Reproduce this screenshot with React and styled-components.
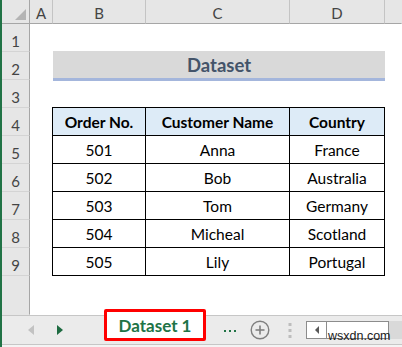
import React from "react";
import styled, { createGlobalStyle } from "styled-components";

const GlobalStyle = createGlobalStyle`
  html, body {
    margin: 0;
    padding: 0;
    background: #ffffff;
    overflow: hidden;
  }
`;

const Frame = styled.div`
  position: relative;
  width: 402px;
  height: 347px;
  box-sizing: border-box;
  border-left: 2px solid #217346;
  display: flex;
  flex-direction: column;
  font-family: Lato, "Open Sans", sans-serif;
  background: #ffffff;
`;

const Sheet = styled.div`
  display: grid;
  grid-template-columns: 28px 23px 93px 144px 95px 1fr;
  grid-template-rows: 24px repeat(9, 28px) 1fr;
  height: 315px;
  background: #ffffff;
`;

const Corner = styled.div`
  background: #e6e6e6;
  border-right: 1px solid #a6a6a6;
  border-bottom: 1px solid #a6a6a6;
  display: flex;
  align-items: flex-end;
  justify-content: flex-end;
  padding: 0 3px 3px 0;
  box-sizing: border-box;
`;

const ColHead = styled.div`
  background: #e6e6e6;
  border-right: 1px solid ${(p) => (p.$last ? "transparent" : "#c4c4c4")};
  border-bottom: 1px solid #a6a6a6;
  color: #444444;
  font-size: 15px;
  display: flex;
  align-items: center;
  justify-content: center;
  padding-top: 2px;
  box-sizing: border-box;
`;

const RowHead = styled.div`
  grid-column: 1;
  background: #e6e6e6;
  border-right: 1px solid #a6a6a6;
  border-bottom: 1px solid ${(p) => (p.$filler ? "transparent" : "#d4d4d4")};
  color: #444444;
  font-size: 15px;
  display: flex;
  align-items: center;
  justify-content: center;
  padding-top: 6px;
  box-sizing: border-box;
`;

const TitleBand = styled.div`
  grid-column: 3 / 6;
  grid-row: 3;
  align-self: start;
  margin-top: -1px;
  height: 30px;
  box-sizing: border-box;
  background: #d9d9d9;
  border-bottom: 3px solid #a4b6dc;
  color: #44546a;
  font-weight: 700;
  font-size: 18.5px;
  display: flex;
  align-items: center;
  justify-content: center;
`;

const Cell = styled.div`
  grid-column: ${(p) => p.$col};
  grid-row: ${(p) => p.$row};
  background: ${(p) => (p.$head ? "#ddebf7" : "#ffffff")};
  font-weight: ${(p) => (p.$head ? 700 : 400)};
  font-size: 15.5px;
  color: #000000;
  border-right: 1px solid #000000;
  border-bottom: 1px solid #000000;
  box-shadow: ${(p) =>
    [
      p.$first ? "-1px 0 0 #000" : null,
      p.$head ? "0 -1px 0 #000" : null,
      p.$first && p.$head ? "-1px -1px 0 #000" : null,
    ]
      .filter(Boolean)
      .join(", ") || "none"};
  display: flex;
  align-items: center;
  justify-content: center;
  box-sizing: border-box;
`;

const TabBar = styled.div`
  height: 30px;
  box-sizing: border-box;
  border-top: 1px solid #c6c6c6;
  border-bottom: 1px solid #c6c6c6;
  background: #ebebeb;
  display: flex;
  align-items: center;
  padding-left: 26px;
`;

const BottomStrip = styled.div`
  flex: 1;
  background: #f4f4f4;
`;

const NavArrow = styled.svg`
  width: 6px;
  height: 10px;
  margin-right: ${(p) => p.$gap}px;
  flex-shrink: 0;
`;

const SheetTab = styled.div`
  align-self: flex-start;
  margin-top: -7px;
  width: 102px;
  height: 32px;
  box-sizing: border-box;
  border: 3px solid #ff0000;
  border-radius: 2px;
  background: #ffffff;
  color: #217346;
  font-weight: 700;
  font-size: 17px;
  display: flex;
  align-items: center;
  justify-content: center;
  padding-top: 1px;
  margin-right: 18px;
  flex-shrink: 0;
`;

const Glyph = styled.svg`
  flex-shrink: 0;
  margin-right: ${(p) => p.$gap}px;
`;

const ScrollBox = styled.div`
  width: 83px;
  height: 18px;
  box-sizing: border-box;
  border: 1px solid #8c8c8c;
  background: #ffffff;
  display: flex;
  flex-shrink: 0;
`;

const ScrollButton = styled.div`
  width: 19px;
  border-right: 1px solid #8c8c8c;
  display: flex;
  align-items: center;
  justify-content: center;
`;

const ScrollTrack = styled.div`
  flex: 1;
  height: 18px;
  background: #d9d9d9;
`;

const Watermark = styled.div`
  position: absolute;
  left: 326px;
  top: 330px;
  font-family: "Liberation Sans", Arial, sans-serif;
  font-size: 12.5px;
  line-height: 13px;
  color: #1a1a1a;
`;

const columns = ["A", "B", "C", "D", ""];

const rows = [
  ["Order No.", "Customer Name", "Country"],
  ["501", "Anna", "France"],
  ["502", "Bob", "Australia"],
  ["503", "Tom", "Germany"],
  ["504", "Micheal", "Scotland"],
  ["505", "Lily", "Portugal"],
];

export default function App() {
  return (
    <>
      <GlobalStyle />
      <Frame>
        <Sheet>
          <Corner>
            <svg width="11" height="11" viewBox="0 0 11 11">
              <polygon points="11,0 11,11 0,11" fill="#b4b4b4" />
            </svg>
          </Corner>
          {columns.map((c, i) => (
            <ColHead key={i} $last={i === columns.length - 1}>
              {c}
            </ColHead>
          ))}
          {Array.from({ length: 9 }, (_, i) => (
            <RowHead key={i} style={{ gridRow: i + 2 }}>
              {i + 1}
            </RowHead>
          ))}
          <RowHead $filler style={{ gridRow: 11 }} />
          <TitleBand>Dataset</TitleBand>
          {rows.map((r, ri) =>
            r.map((v, ci) => (
              <Cell
                key={`${ri}-${ci}`}
                $row={ri + 5}
                $col={ci + 3}
                $head={ri === 0}
                $first={ci === 0}
              >
                {v}
              </Cell>
            ))
          )}
        </Sheet>
        <TabBar>
          <NavArrow $gap={23} viewBox="0 0 6 10">
            <polygon points="6,0 6,10 0,5" fill="#c2c2c2" />
          </NavArrow>
          <NavArrow $gap={41} viewBox="0 0 6 10">
            <polygon points="0,0 0,10 6,5" fill="#1e6b41" />
          </NavArrow>
          <SheetTab>Dataset 1</SheetTab>
          <Glyph $gap={14} width="12" height="6" viewBox="0 0 12 6">
            <rect x="0" y="3" width="2" height="2" fill="#217346" />
            <rect x="5" y="3" width="2" height="2" fill="#217346" />
            <rect x="10" y="3" width="2" height="2" fill="#217346" />
          </Glyph>
          <Glyph $gap={18} width="20" height="20" viewBox="0 0 20 20">
            <circle cx="10" cy="10" r="8.8" fill="none" stroke="#7f7f7f" strokeWidth="1.4" />
            <line x1="5.5" y1="10" x2="14.5" y2="10" stroke="#7f7f7f" strokeWidth="1.6" />
            <line x1="10" y1="5.5" x2="10" y2="14.5" stroke="#7f7f7f" strokeWidth="1.6" />
          </Glyph>
          <Glyph $gap={14} width="4" height="15" viewBox="0 0 4 15">
            <rect x="0.5" y="0" width="3" height="3" fill="#bdbdbd" />
            <rect x="0.5" y="6" width="3" height="3" fill="#bdbdbd" />
            <rect x="0.5" y="12" width="3" height="3" fill="#bdbdbd" />
          </Glyph>
          <ScrollBox>
            <ScrollButton>
              <svg width="4" height="8" viewBox="0 0 4 8">
                <polygon points="4,0 4,8 0,4" fill="#595959" />
              </svg>
            </ScrollButton>
          </ScrollBox>
          <ScrollTrack />
        </TabBar>
        <BottomStrip />
        <Watermark>wsxdn.com</Watermark>
      </Frame>
    </>
  );
}
